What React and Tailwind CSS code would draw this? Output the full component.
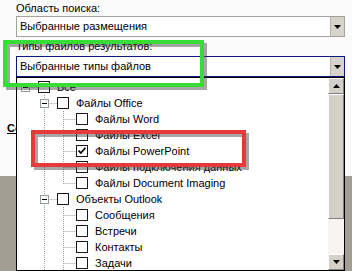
import React from 'react'

const rows = [
  { level: 0, guides: [], conn: 'none', exp: true, label: 'Все' },
  { level: 1, guides: [false], conn: 'mid', exp: true, label: 'Файлы Office' },
  { level: 2, guides: [false, true], conn: 'mid', label: 'Файлы Word' },
  { level: 2, guides: [false, true], conn: 'mid', label: 'Файлы Excel' },
  { level: 2, guides: [false, true], conn: 'mid', label: 'Файлы PowerPoint', checked: true },
  { level: 2, guides: [false, true], conn: 'mid', label: 'Файлы подключения данных' },
  { level: 2, guides: [false, true], conn: 'end', label: 'Файлы Document Imaging' },
  { level: 1, guides: [false], conn: 'mid', exp: true, label: 'Объекты Outlook' },
  { level: 2, guides: [false, true], conn: 'mid', label: 'Сообщения' },
  { level: 2, guides: [false, true], conn: 'mid', label: 'Встречи' },
  { level: 2, guides: [false, true], conn: 'mid', label: 'Контакты' },
  { level: 2, guides: [false, true], conn: 'mid', label: 'Задачи' },
]

const Arrow = ({ up }) => (
  <svg width="7" height="4" viewBox="0 0 7 4">
    <polygon points={up ? '0,4 7,4 3.5,0' : '0,0 7,0 3.5,4'} fill="#000" />
  </svg>
)

const Combo = ({ text, focused }) => (
  <div
    className={`ml-4 w-[329px] h-[21px] flex bg-white border ${
      focused ? 'border-[#0b1a7c]' : 'border-[#a5a29a]'
    }`}
  >
    <div className="flex-1 pl-[3px] flex items-center whitespace-nowrap">{text}</div>
    <div className="w-[14px] h-full bg-[#d6d3cc] border-l border-[#b8b5ad] flex items-center justify-center">
      <Arrow />
    </div>
  </div>
)

const Checkbox = ({ checked }) => (
  <div className="w-[12px] h-[12px] shrink-0 border border-[#1a1a1a] bg-white flex items-center justify-center">
    {checked && (
      <svg width="10" height="10" viewBox="0 0 10 10">
        <path d="M1.5 4.5 L3.8 7 L8.5 1.8" stroke="#000" strokeWidth="1.7" fill="none" />
      </svg>
    )}
  </div>
)

const TreeRow = ({ level, guides, conn, exp, checked, label }) => {
  const w = level * 19 + 21
  const cx = level * 19 + 8.5
  return (
    <div className="h-4 flex items-center">
      <svg width={w} height="16" className="shrink-0">
        {guides.map(
          (g, j) =>
            g && (
              <line key={j} x1={j * 19 + 8.5} y1="0" x2={j * 19 + 8.5} y2="16" stroke="#a0a0a0" strokeDasharray="1 1" />
            )
        )}
        {conn !== 'none' && (
          <line x1={cx} y1="0" x2={cx} y2={conn === 'mid' ? 16 : 9} stroke="#a0a0a0" strokeDasharray="1 1" />
        )}
        <line x1={cx} y1="8.5" x2={w} y2="8.5" stroke="#a0a0a0" strokeDasharray="1 1" />
        {exp && (
          <>
            <rect x={level * 19 + 4.5} y="4.5" width="8" height="8" fill="#fff" stroke="#919b9c" />
            <line x1={level * 19 + 6} y1="8.5" x2={level * 19 + 11} y2="8.5" stroke="#000" />
          </>
        )}
      </svg>
      <Checkbox checked={checked} />
      <span className="ml-[7px] whitespace-nowrap">{label}</span>
    </div>
  )
}

const SbButton = ({ up }) => (
  <div className="h-4 shrink-0 bg-[#d4d0c8] border border-t-white border-l-white border-r-[#808080] border-b-[#808080] flex items-center justify-center">
    <Arrow up={up} />
  </div>
)

const App = () => {
  return (
    <div className="relative w-[352px] h-[271px] overflow-hidden bg-[#fbfbfb] font-['Liberation_Sans',Arial,sans-serif] text-[11px] leading-[13px] text-black flex flex-col">
      <div className="pl-4 pt-[2px] h-4 shrink-0">Область поиска:</div>
      <Combo text="Выбранные размещения" />
      <div className="pl-4 mt-[3px] h-[13px] shrink-0">Типы файлов результатов:</div>
      <div className="mt-[3px]">
        <Combo text="Выбранные типы файлов" focused />
      </div>
      <div className="mt-[45px] pl-[7px] font-bold underline whitespace-nowrap">Сортировать по</div>
      <div className="mt-auto h-[95px] shrink-0 bg-[#a39e93]" />

      {/* dropdown list */}
      <div className="absolute left-4 top-[77px] w-[329px] h-[194px] bg-white border border-black flex">
        <div className="flex-1 overflow-hidden pt-[1px]">
          {rows.map((r) => (
            <TreeRow key={r.label} {...r} />
          ))}
        </div>
        <div className="w-4 flex flex-col">
          <SbButton up />
          <div className="h-[125px] shrink-0 bg-[#d4d0c8] border border-t-white border-l-white border-r-[#808080] border-b-[#808080]" />
          <div className="flex-1 bg-[#f6f5f1]" />
          <SbButton />
        </div>
      </div>

      {/* annotation boxes */}
      <div className="absolute left-[3px] top-[40px] w-[201px] h-[47px] border-4 border-[#38dc38] shadow-[3px_3px_0_rgba(60,60,60,0.45),inset_3px_3px_0_rgba(60,60,60,0.45)]" />
      <div className="absolute left-[31px] top-[130px] w-[215px] h-[37px] border-4 border-[#e63a3a] shadow-[3px_3px_0_rgba(60,60,60,0.45),inset_3px_3px_0_rgba(60,60,60,0.45)]" />
    </div>
  )
}

export default App
